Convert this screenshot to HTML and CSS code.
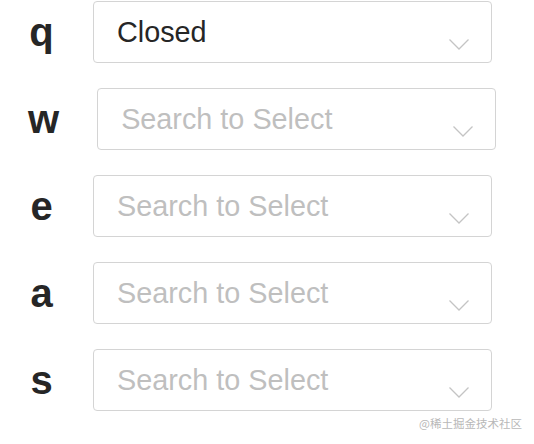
FILE: index.html
```html
<!DOCTYPE html>
<html>
<head>
<meta charset="utf-8">
<link rel="stylesheet" href="styles.css">
</head>
<body>
<div class="form">
  <div class="row">
    <span class="label">q</span>
    <div class="select">
      <span class="value">Closed</span>
      <svg class="arrow" width="20" height="11" viewBox="0 0 20 11"><polyline points="0.5,0.5 10,10 19.5,0.5" fill="none" stroke="#c4c4c4" stroke-width="1.3"/></svg>
    </div>
  </div>
  <div class="row">
    <span class="label">w</span>
    <div class="select">
      <span class="value placeholder">Search to Select</span>
      <svg class="arrow" width="20" height="11" viewBox="0 0 20 11"><polyline points="0.5,0.5 10,10 19.5,0.5" fill="none" stroke="#c4c4c4" stroke-width="1.3"/></svg>
    </div>
  </div>
  <div class="row">
    <span class="label">e</span>
    <div class="select">
      <span class="value placeholder">Search to Select</span>
      <svg class="arrow" width="20" height="11" viewBox="0 0 20 11"><polyline points="0.5,0.5 10,10 19.5,0.5" fill="none" stroke="#c4c4c4" stroke-width="1.3"/></svg>
    </div>
  </div>
  <div class="row">
    <span class="label">a</span>
    <div class="select">
      <span class="value placeholder">Search to Select</span>
      <svg class="arrow" width="20" height="11" viewBox="0 0 20 11"><polyline points="0.5,0.5 10,10 19.5,0.5" fill="none" stroke="#c4c4c4" stroke-width="1.3"/></svg>
    </div>
  </div>
  <div class="row">
    <span class="label">s</span>
    <div class="select">
      <span class="value placeholder">Search to Select</span>
      <svg class="arrow" width="20" height="11" viewBox="0 0 20 11"><polyline points="0.5,0.5 10,10 19.5,0.5" fill="none" stroke="#c4c4c4" stroke-width="1.3"/></svg>
    </div>
  </div>
  <div class="watermark">@稀土掘金技术社区</div>
</div>
</body>
</html>
```

FILE: styles.css
```css
html, body {
  margin: 0;
  padding: 0;
  background: #ffffff;
}

.form {
  padding-top: 1px;
  font-family: "Liberation Sans", Arial, "Noto Sans CJK SC", sans-serif;
  display: flex;
  flex-direction: column;
  gap: 25px;
}

.row {
  display: flex;
  align-items: center;
  padding-left: 28px;
}

.label {
  min-width: 27px;
  margin-right: 38px;
  text-align: center;
  font-size: 40px;
  font-weight: bold;
  color: #262626;
}

.select {
  box-sizing: border-box;
  width: 399px;
  height: 62px;
  border: 1px solid #d4d4d4;
  border-radius: 4px;
  display: flex;
  align-items: center;
  padding-left: 23px;
}

.value {
  flex: 1;
  font-size: 28.8px;
  color: #262626;
}

.placeholder {
  color: #bfbfbf;
}

.arrow {
  align-self: flex-end;
  margin-bottom: 12px;
  margin-right: 22px;
}

.watermark {
  margin-top: -21px;
  align-self: flex-end;
  margin-right: 12px;
  font-size: 11.5px;
  color: #b8b8b8;
  font-family: "Noto Sans CJK SC", sans-serif;
}
```
